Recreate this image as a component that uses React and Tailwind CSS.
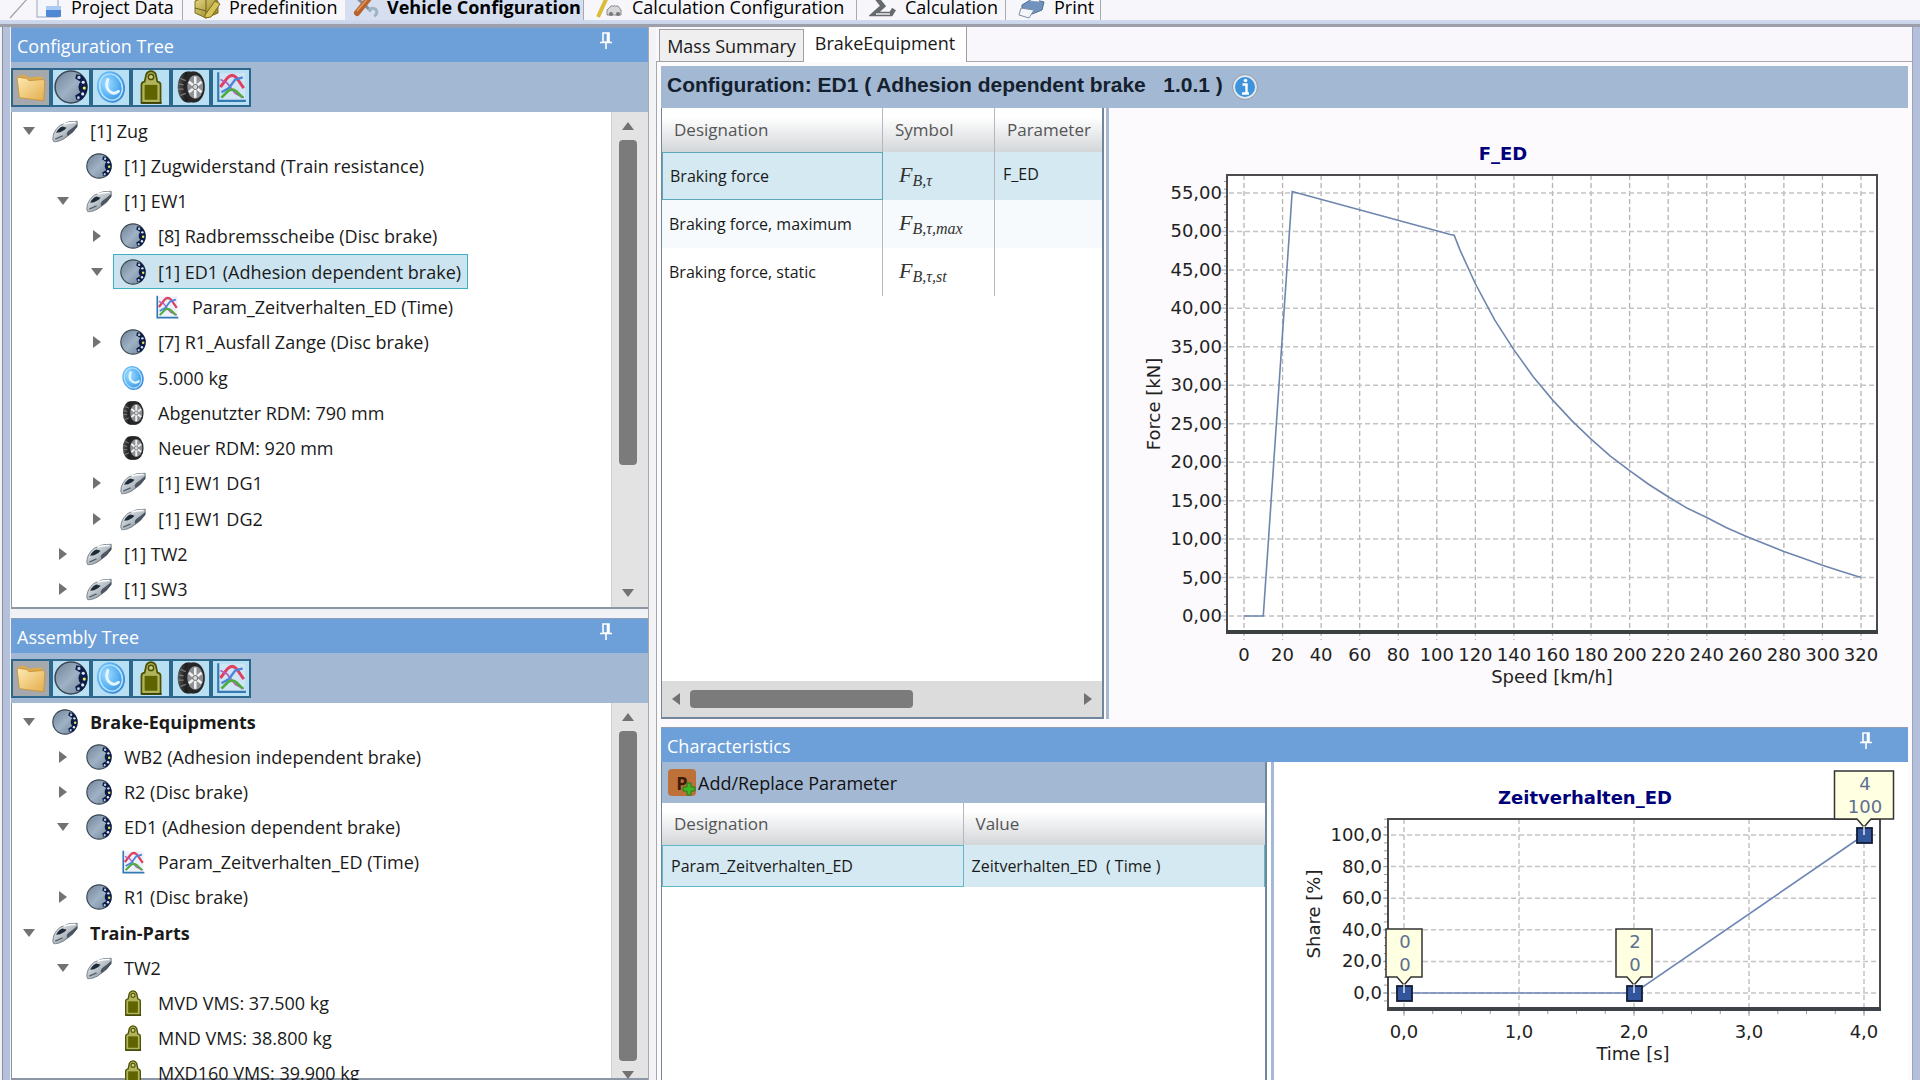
import React from "react";

const UI = "font-['Open_Sans','Noto_Sans',sans-serif]";

/* ---------- shared gradients ---------- */
function Gradients() {
  return (
    <svg width="0" height="0" className="absolute" aria-hidden="true">
      <defs>
        <linearGradient id="gDisc" x1="0" y1="0" x2="1" y2="1">
          <stop offset="0" stopColor="#6f8296" />
          <stop offset="0.5" stopColor="#9fb1c4" />
          <stop offset="1" stopColor="#6d8096" />
        </linearGradient>
        <radialGradient id="gBlue" cx="0.4" cy="0.35" r="0.7">
          <stop offset="0" stopColor="#a4dcff" />
          <stop offset="0.55" stopColor="#5cb4f4" />
          <stop offset="1" stopColor="#3585d8" />
        </radialGradient>
        <linearGradient id="gFolder" x1="0" y1="0" x2="1" y2="1">
          <stop offset="0" stopColor="#fdeab2" />
          <stop offset="1" stopColor="#e3ad4c" />
        </linearGradient>
        <linearGradient id="gTyre" x1="0" y1="0" x2="1" y2="0">
          <stop offset="0" stopColor="#555555" />
          <stop offset="0.4" stopColor="#1d1d1d" />
          <stop offset="1" stopColor="#333333" />
        </linearGradient>
        <linearGradient id="gTrain" x1="0" y1="0" x2="1" y2="1">
          <stop offset="0" stopColor="#f1f3f5" />
          <stop offset="0.55" stopColor="#b4bcc3" />
          <stop offset="1" stopColor="#4b5660" />
        </linearGradient>
        <linearGradient id="gCube" x1="0" y1="0" x2="1" y2="1">
          <stop offset="0" stopColor="#e8dc86" />
          <stop offset="1" stopColor="#8c7a1c" />
        </linearGradient>
      </defs>
    </svg>
  );
}

/* ---------- icons ---------- */
const Icon = ({ className = "size-[26px]", children, box = "0 0 32 32" }) => (
  <svg viewBox={box} className={`${className} shrink-0`} aria-hidden="true">{children}</svg>
);

const DiscIcon = (p) => (
  <Icon {...p}>
    <circle cx="16" cy="16" r="15" fill="url(#gDisc)" stroke="#3b4754" strokeWidth="1.4" />
    <path d="M21 4 L26 5 Q31.5 10 31.5 16 Q31.5 23 26 28 L21 28 L20 24 L25 21 Q23 19 23 16 Q23 13 25 11 L20 8Z" fill="#0d1c47" />
    <circle cx="23.500" cy="7" r="1.500" fill="#bcd0e8" />
    <circle cx="27.500" cy="11.500" r="1.500" fill="#dbe8f4" />
    <circle cx="28.500" cy="17" r="1.500" fill="#e6e96a" />
    <circle cx="27" cy="22.500" r="1.500" fill="#dbe8f4" />
    <circle cx="23" cy="26" r="1.300" fill="#bcd0e8" />
  </Icon>
);
const BlueIcon = (p) => (
  <Icon {...p}>
    <ellipse cx="16" cy="16" rx="13" ry="15" fill="url(#gBlue)" transform="rotate(-18 16 16)" />
    <ellipse cx="16" cy="16" rx="10.500" ry="12.500" fill="none" stroke="#b8e4ff" strokeWidth="1.4" transform="rotate(-18 16 16)" />
    <path d="M13 9 Q10 18 16 21 Q20 23 23 20" fill="none" stroke="#e4f6ff" strokeWidth="2.800" strokeLinecap="round" />
  </Icon>
);
const WeightIcon = (p) => (
  <Icon {...p}>
    <path d="M7 31 V14 Q7 11.500 10 11 L11.500 4 Q13 1 16 1 Q19 1 20.500 4 L22 11 Q25 11.500 25 14 V31Z" fill="#b0b45c" stroke="#4b5000" strokeWidth="1.6" />
    <rect x="10" y="14" width="12" height="14" fill="#5f6400" />
    <circle cx="16" cy="6.500" r="2.500" fill="#c9cc8a" stroke="#4b5000" strokeWidth="1.300" />
    <path d="M7 31 H26" stroke="#3b3f00" strokeWidth="1.500" />
  </Icon>
);
const WheelIcon = (p) => (
  <Icon {...p}>
    <ellipse cx="13" cy="16" rx="9.500" ry="14.500" fill="url(#gTyre)" />
    <rect x="13" y="1.500" width="6" height="29" fill="#2a2a2a" />
    <ellipse cx="19" cy="16" rx="10" ry="14.500" fill="#262626" />
    <path d="M6 8l5 2M4 13l5 1M4 18l5 0M6 24l5-2" stroke="#7d7d7d" strokeWidth="1.200" />
    <ellipse cx="20" cy="16" rx="7.500" ry="11" fill="#8d9094" />
    <path d="M20 16V6M20 16l6-5M20 16l6 5M20 16v10M20 16l-6 5M20 16l-6-5" stroke="#f0f1f2" strokeWidth="2.400" />
    <circle cx="20" cy="16" r="2.400" fill="#d7d9db" stroke="#555" strokeWidth="0.800" />
  </Icon>
);
const CurveIcon = (p) => (
  <Icon {...p}>
    <rect x="5" y="3" width="24" height="25" fill="#dfe9f5" opacity="0.6" />
    <path d="M4 2V29H30" fill="none" stroke="#3478b4" strokeWidth="2" />
    <path d="M6 16 L13 7 Q17 3 21 7 L28 17" fill="none" stroke="#e04060" strokeWidth="2.800" />
    <path d="M6 9 L12 12 L20 22 L28 26" fill="none" stroke="#b85ab8" strokeWidth="1.600" />
    <path d="M7 21 L14 17 L20 9 L27 7" fill="none" stroke="#4a84dc" strokeWidth="2.200" />
    <path d="M7 26 L13 20 Q17 17 21 20 L27 26" fill="none" stroke="#4dac3c" strokeWidth="2.600" />
  </Icon>
);
const TrainIcon = (p) => (
  <Icon {...p}>
    <path d="M1 26 Q1 16 10 9 Q20 3 31 4 L31 10 Q26 19 14 26 Q6 30 2 29Z" fill="url(#gTrain)" stroke="#69737c" strokeWidth="1" />
    <path d="M5 18 Q8 12 13 10.500 L18 12 Q15 16 10 17.500Z" fill="#1d2a38" />
    <path d="M20 16 Q26 12 31 7.500 L31 11 Q27 17 19 22 Q17 19 20 16Z" fill="#3c4753" opacity="0.850" />
    <path d="M14 7.500 Q21 5 29 5.500" fill="none" stroke="#ffffff" strokeWidth="1.800" />
    <path d="M4 26 L13 22" stroke="#56616c" strokeWidth="1.400" />
  </Icon>
);
const FolderIcon = (p) => (
  <Icon {...p}>
    <path d="M3 6 L10 4 L13 7 L25 6 Q27 6 27 8 V28 L5 26Z" fill="#dca94c" />
    <path d="M3 8 Q3 7 5 7 L12 8 L14 10 L27 9 Q29 9 29 11 L28 29 L5 26Z" fill="url(#gFolder)" stroke="#c8923a" strokeWidth="0.800" />
  </Icon>
);

const icons = { disc: DiscIcon, blue: BlueIcon, weight: WeightIcon, wheel: WheelIcon, curve: CurveIcon, train: TrainIcon, folder: FolderIcon };

const PinIcon = () => (
  <svg viewBox="0 0 12 17" className="h-[17px] w-3" aria-hidden="true">
    <path d="M3 1H9V10H3ZM7.500 1V10M0 10.500H12M6 10.500V17" fill="none" stroke="#fff" strokeWidth="1.600" />
  </svg>
);

const Arrow = ({ dir, className = "" }) => {
  const d = { down: "M0 1H12L6 9Z", up: "M0 9H12L6 1Z", right: "M2 -1V11L10 5Z", left: "M10 -1V11L2 5Z" }[dir];
  return (
    <svg viewBox="0 -1 12 12" className={`size-3 shrink-0 ${className}`} aria-hidden="true">
      <path d={d} fill="#727272" />
    </svg>
  );
};

/* ---------- top ribbon ---------- */
const Slash = () => (
  <svg viewBox="0 0 24 20" className="h-5 w-6" aria-hidden="true">
    <path d="M2 18L20 -2" stroke="#a4a4ac" strokeWidth="1.300" fill="none" />
  </svg>
);
const DocIcon = () => (
  <Icon className="size-7" box="0 0 28 28">
    <rect x="2" y="0" width="21" height="24" fill="#f4f6fb" stroke="#9aa4b8" />
    <rect x="11" y="13" width="15" height="11" rx="1" fill="#4f87d4" />
    <rect x="11" y="13" width="15" height="4" fill="#a9caf4" />
  </Icon>
);
const CubeIcon = () => (
  <Icon className="size-7" box="0 0 28 28">
    <path d="M2 8L13 4L25 8V20L13 25L2 20Z" fill="url(#gCube)" stroke="#7f701e" />
    <path d="M13 4V25M2 15L13 18" stroke="#6d6018" fill="none" />
    <path d="M12 22L22 8L27 11L18 24L12 25Z" fill="#d6c45a" stroke="#7b6c1a" />
  </Icon>
);
const ToolsIcon = () => (
  <Icon className="size-7" box="0 0 28 28">
    <path d="M3 2L20 18" stroke="#7d8ea0" strokeWidth="3" />
    <path d="M23 23a4 4 0 1 0-5-5" fill="none" stroke="#9eb4c4" strokeWidth="3" />
    <path d="M19 4L6 20" stroke="#b9622c" strokeWidth="6" strokeLinecap="round" />
    <path d="M19 3L6 18" stroke="#e19a62" strokeWidth="1.500" />
  </Icon>
);
const CalcConfIcon = () => (
  <Icon className="size-7" box="0 0 28 28">
    <path d="M2 24L12 2" stroke="#d9bd3a" strokeWidth="4" />
    <path d="M11 22V17L15 13H22L25 17V22Z" fill="#d7d7da" stroke="#8b8b90" />
    <circle cx="15" cy="21" r="2" fill="#777" /><circle cx="22" cy="21" r="2" fill="#777" />
  </Icon>
);
const SigmaIcon = () => (
  <Icon className="size-7" box="0 0 28 28">
    <path d="M23 7V3H6L14 13L5 21H22L25 16" fill="none" stroke="#66696e" strokeWidth="4.500" />
    <path d="M7 21H21" stroke="#d5d7d9" strokeWidth="1.800" />
  </Icon>
);
const PrintIcon = () => (
  <Icon className="size-7" box="0 0 28 28">
    <path d="M4 12L14 6L26 9L24 17L14 21L4 18Z" fill="#6f93bd" stroke="#4b6c96" />
    <path d="M3 15L16 17L11 25L1 22Z" fill="#f2f5f9" stroke="#7d8ea6" />
    <path d="M12 8L15 0H24L21 9Z" fill="#fff" stroke="#8fa3bd" />
  </Icon>
);

function RibbonTab({ icon, label, active, className = "" }) {
  return (
    <button type="button" className={`flex h-[27px] shrink-0 items-center gap-2 whitespace-nowrap text-lg leading-6 text-black ${active ? "font-bold" : ""} ${className}`}>
      {icon}
      {label}
    </button>
  );
}
const Sep = () => <span className="h-5 w-px bg-[#a9a9b2]" />;

function Ribbon() {
  return (
    <nav className="shrink-0 border-b-3 border-[#9c9ea9] bg-gradient-to-b from-[#f3f4f9] to-[#c9d4ea]">
      <div className="mb-1 flex h-5 items-end overflow-hidden bg-[#f7f7fb] pl-2">
        <Slash />
        <RibbonTab icon={<DocIcon />} label="Project Data" className="w-[150px] pl-[3px]" />
        <Sep />
        <RibbonTab icon={<CubeIcon />} label="Predefinition" className="w-[162px] pl-[10px]" />
        <div className="flex h-[27px] w-[238px] items-center bg-[#d5dff0] pl-[6px]">
          <RibbonTab icon={<ToolsIcon />} label="Vehicle Configuration" active />
        </div>
        <Sep />
        <RibbonTab icon={<CalcConfIcon />} label="Calculation Configuration" className="w-[272px] pl-3" />
        <Sep />
        <RibbonTab icon={<SigmaIcon />} label="Calculation" className="w-[148px] pl-3" />
        <Sep />
        <RibbonTab icon={<PrintIcon />} label="Print" className="w-[94px] pl-3" />
        <Sep />
      </div>
    </nav>
  );
}

/* ---------- trees ---------- */
const toolbarItems = [
  ["folder", "Folders"], ["disc", "Brakes"], ["blue", "Rotating mass"],
  ["weight", "Mass"], ["wheel", "Wheels"], ["curve", "Curves"],
];

const indents = ["pl-[11px]", "pl-[45px]", "pl-[79px]", "pl-[113px]"];

function TreeRow({ depth, arrow, icon, label, bold, selected }) {
  const I = icons[icon];
  return (
    <li className={`flex items-center whitespace-nowrap ${indents[depth]}`}>
      {arrow ? (
        <button type="button" aria-label={`Toggle ${label}`} className="size-3"><Arrow dir={arrow} /></button>
      ) : (
        <span className="w-3" />
      )}
      <button
        type="button"
        className={`ml-[10px] flex h-[35px] items-center gap-3 border pr-1.5 pl-[6px] ${selected ? "border-[#3fb0c4] bg-[#cbe4ef]" : "border-transparent"} ${bold ? "font-bold" : ""}`}
      >
        <I />
        {label}
      </button>
    </li>
  );
}

function PanelHeader({ title }) {
  return (
    <header className="flex h-[35px] shrink-0 items-start justify-between border-t border-[#8f9fb8] bg-[#6d9fd8] pr-9 pl-[6px] text-white">
      <h2 className="text-lg leading-9">{title}</h2>
      <button type="button" aria-label="Pin panel" className="mt-1"><PinIcon /></button>
    </header>
  );
}

function TreePanel({ title, rows, listClass, thumbClass, className }) {
  return (
    <section className={`flex flex-col overflow-hidden ${className}`}>
      <PanelHeader title={title} />
      <div className="flex h-[50px] shrink-0 items-center bg-[#a3b8d2]">
        {toolbarItems.map(([name, label], i) => {
          const I = icons[name];
          return (
            <button
              key={name}
              type="button"
              aria-label={label}
              className={`flex h-[39px] w-10 items-center justify-center border-2 border-[#2d678c] ${i === 0 ? "bg-[#a5a9ae]" : "bg-[#b9dff3]"}`}
            >
              <I className="size-[34px]" />
            </button>
          );
        })}
      </div>
      <div className="flex min-h-0 flex-1 border-b-2 border-l border-[#8d96a5] bg-white">
        <ul className={`grid flex-1 auto-rows-fr pt-px text-lg leading-6 text-[#1a1a1a] ${listClass}`}>
          {rows.map((r) => <TreeRow key={r.label + r.depth} {...r} />)}
        </ul>
        <div className="flex w-[37px] flex-col items-center border-l border-[#d0d0d0] bg-[#e3e3e3] py-2 pr-1">
          <Arrow dir="up" />
          <span className={`my-2 w-[18px] rounded-sm bg-[#7b7b7b] ${thumbClass}`} />
          <span className="flex-1" />
          <Arrow dir="down" />
        </div>
      </div>
    </section>
  );
}

const configRows = [
  { depth: 0, arrow: "down", icon: "train", label: "[1] Zug" },
  { depth: 1, icon: "disc", label: "[1] Zugwiderstand (Train resistance)" },
  { depth: 1, arrow: "down", icon: "train", label: "[1] EW1" },
  { depth: 2, arrow: "right", icon: "disc", label: "[8] Radbremsscheibe (Disc brake)" },
  { depth: 2, arrow: "down", icon: "disc", label: "[1] ED1 (Adhesion dependent brake)", selected: true },
  { depth: 3, icon: "curve", label: "Param_Zeitverhalten_ED (Time)" },
  { depth: 2, arrow: "right", icon: "disc", label: "[7] R1_Ausfall Zange (Disc brake)" },
  { depth: 2, icon: "blue", label: "5.000 kg" },
  { depth: 2, icon: "wheel", label: "Abgenutzter RDM: 790 mm" },
  { depth: 2, icon: "wheel", label: "Neuer RDM: 920 mm" },
  { depth: 2, arrow: "right", icon: "train", label: "[1] EW1 DG1" },
  { depth: 2, arrow: "right", icon: "train", label: "[1] EW1 DG2" },
  { depth: 1, arrow: "right", icon: "train", label: "[1] TW2" },
  { depth: 1, arrow: "right", icon: "train", label: "[1] SW3" },
];

const assemblyRows = [
  { depth: 0, arrow: "down", icon: "disc", label: "Brake-Equipments", bold: true },
  { depth: 1, arrow: "right", icon: "disc", label: "WB2 (Adhesion independent brake)" },
  { depth: 1, arrow: "right", icon: "disc", label: "R2 (Disc brake)" },
  { depth: 1, arrow: "down", icon: "disc", label: "ED1 (Adhesion dependent brake)" },
  { depth: 2, icon: "curve", label: "Param_Zeitverhalten_ED (Time)" },
  { depth: 1, arrow: "right", icon: "disc", label: "R1 (Disc brake)" },
  { depth: 0, arrow: "down", icon: "train", label: "Train-Parts", bold: true },
  { depth: 1, arrow: "down", icon: "train", label: "TW2" },
  { depth: 2, icon: "weight", label: "MVD VMS: 37.500 kg" },
  { depth: 2, icon: "weight", label: "MND VMS: 38.800 kg" },
  { depth: 2, icon: "weight", label: "MXD160 VMS: 39.900 kg" },
];

/* ---------- charts ---------- */
const chartFont = "font-['DejaVu_Sans',sans-serif]";

const forceCurve = [
  [0, 0], [10, 0], [25, 55.2], [107, 49.6], [109, 49.5], [112, 47.6], [120, 43.2], [130, 38.5], [140, 34.6], [150, 31.1],
  [160, 28.1], [170, 25.4], [180, 23], [190, 20.8], [200, 18.9], [210, 17.1], [220, 15.5], [230, 14], [240, 12.8],
  [250, 11.5], [260, 10.4], [270, 9.4], [280, 8.4], [290, 7.5], [300, 6.6], [310, 5.8], [320, 5],
];

function ForceChart() {
  const X = (v) => 135 + (v * 617) / 320;
  const Y = (v) => 508 - (v * 423) / 55;
  const xs = Array.from({ length: 17 }, (_, i) => i * 20);
  const ys = Array.from({ length: 12 }, (_, i) => i * 5);
  return (
    <svg viewBox="0 0 799 615" className={`block w-full text-lg ${chartFont}`} role="img" aria-label="F_ED: force over speed">
      <rect x="118" y="67" width="650" height="458" fill="#fff" />
      {xs.map((v) => <path key={v} d={`M${X(v)} 67V532`} stroke="#b4b4b4" strokeWidth="1.300" strokeDasharray="5 3" />)}
      {ys.map((v) => <path key={v} d={`M112 ${Y(v)}H768`} stroke="#c4c4c4" strokeWidth="1.500" strokeDasharray="5 3" />)}
      {Array.from({ length: 58 }, (_, i) => <path key={i} d={`M115 ${Y(i - 0.5)}H118`} stroke="#999" />)}
      <rect x="118" y="67" width="650" height="458" fill="none" stroke="#4b4b4b" strokeWidth="2" />
      <path d="M117 524H769" stroke="#3d4040" strokeWidth="4" />
      <polyline points={forceCurve.map(([a, b]) => `${X(a)},${Y(b)}`).join(" ")} fill="none" stroke="#6e86ad" strokeWidth="1.600" />
      {ys.map((v) => <text key={v} x="113" y={Y(v) + 6} textAnchor="end" fill="#222">{`${v},00`}</text>)}
      {xs.map((v) => <text key={v} x={X(v)} y="553" textAnchor="middle" fill="#222">{v}</text>)}
      <text x="443" y="575" textAnchor="middle" fill="#222">Speed [km/h]</text>
      <text transform="translate(51 296) rotate(-90)" textAnchor="middle" fill="#222">Force [kN]</text>
      <text x="394" y="52" textAnchor="middle" fill="#00007a" fontWeight="bold">F_ED</text>
    </svg>
  );
}

function Callout({ x, y, w, top, bottom }) {
  const h = w / 2;
  return (
    <g>
      <path d={`M${x - h} ${y - 64}H${x + h}V${y - 16}H${x + 7}L${x} ${y - 8}L${x - 7} ${y - 16}H${x - h}Z`} fill="#ffffe1" stroke="#333" strokeWidth="1.500" />
      <rect x={x - 7} y={y - 7} width="15" height="15" fill="#33559c" stroke="#111d38" strokeWidth="1.800" />
      <path d={`M${x} ${y - 9}V${y}`} stroke="#dfe6f2" strokeWidth="1.500" />
      <text x={x + 1} y={y - 45} textAnchor="middle" fill="#5e6f94">{top}</text>
      <text x={x + 1} y={y - 22} textAnchor="middle" fill="#5e6f94">{bottom}</text>
    </g>
  );
}

function TimeChart() {
  const X = (v) => 130 + v * 115;
  const Y = (v) => 231 - v * 1.58;
  const xs = [0, 1, 2, 3, 4];
  const ys = [0, 20, 40, 60, 80, 100];
  return (
    <svg viewBox="0 0 634 318" className={`block w-full text-lg ${chartFont}`} role="img" aria-label="Zeitverhalten_ED: share over time">
      {xs.map((v) => <path key={v} d={`M${X(v)} 57V255`} stroke="#c4c4c4" strokeWidth="1.500" strokeDasharray="5 3" />)}
      {ys.map((v) => <path key={v} d={`M109 ${Y(v)}H606`} stroke="#c4c4c4" strokeWidth="1.500" strokeDasharray="5 3" />)}
      {Array.from({ length: 24 }, (_, i) => <path key={i} d={`M110 ${Y(i * 5 - 5)}H113`} stroke="#999" />)}
      {Array.from({ length: 17 }, (_, i) => <path key={i} d={`M${X(i / 4)} 249V252`} stroke="#999" />)}
      <rect x="114" y="57" width="492" height="191" fill="none" stroke="#4b4b4b" strokeWidth="2" />
      <path d="M113 247H607" stroke="#3d4348" strokeWidth="4" />
      <polyline points={`${X(0)},${Y(0)} ${X(2)},${Y(0)} ${X(4)},${Y(100)}`} fill="none" stroke="#6e86b5" strokeWidth="1.600" />
      {ys.map((v) => <text key={v} x="108" y={Y(v) + 6} textAnchor="end" fill="#222">{`${v},0`}</text>)}
      {xs.map((v) => <text key={v} x={X(v)} y="276" textAnchor="middle" fill="#222">{`${v},0`}</text>)}
      <text x="359" y="298" textAnchor="middle" fill="#222">Time [s]</text>
      <text transform="translate(46 152) rotate(-90)" textAnchor="middle" fill="#222">Share [%]</text>
      <text x="311" y="42" textAnchor="middle" fill="#00007a" fontWeight="bold">Zeitverhalten_ED</text>
      <Callout x={X(0)} y={Y(0)} w={36} top="0" bottom="0" />
      <Callout x={X(2)} y={Y(0)} w={36} top="2" bottom="0" />
      <Callout x={X(4)} y={Y(100)} w={59} top="4" bottom="100" />
    </svg>
  );
}

/* ---------- tables ---------- */
const th = "border-r border-[#b4b8bc] text-[17px] font-normal text-left text-[#555] last:border-r-0";
const headGradient = "bg-gradient-to-b from-white from-20% to-[#d3d6d9]";

const Sym = ({ sub }) => (
  <span className="font-['Liberation_Serif',serif] text-[22px] leading-none text-[#333] italic">
    F<sub className="text-base">{sub}</sub>
  </span>
);

const forces = [
  ["Braking force", "B,τ", "F_ED"],
  ["Braking force, maximum", "B,τ,max", ""],
  ["Braking force, static", "B,τ,st", ""],
];

function ForceTable() {
  return (
    <div className="flex w-[443px] shrink-0 flex-col border-r-2 border-b-2 border-l border-[#71869b] bg-white">
      <table className="w-full table-fixed border-separate border-spacing-0 text-base">
        <colgroup><col className="w-[221px]" /><col className="w-[112px]" /><col /></colgroup>
        <thead>
          <tr className={`h-11 ${headGradient}`}>
            <th className={`${th} pl-3`}>Designation</th>
            <th className={`${th} pl-3`}>Symbol</th>
            <th className={`${th} pl-3`}>Parameter</th>
          </tr>
        </thead>
        <tbody>
          {forces.map(([name, sub, param], i) => (
            <tr key={name} className={`h-12 ${["bg-[#d4e9f2]", "bg-[#f6fafc]", "bg-white"][i]}`}>
              <td className={`pl-[7px] ${i === 0 ? "border border-[#5aa7b5]" : "border-r border-[#b4b8bc]"}`}>{name}</td>
              <td className="border-r border-[#b4b8bc] pl-4"><Sym sub={sub} /></td>
              <td className="pb-1 pl-2">{param}</td>
            </tr>
          ))}
        </tbody>
      </table>
      <div className="mt-auto flex h-9 items-center bg-[#dcdcdc] px-2">
        <Arrow dir="left" />
        <span className="ml-2 h-[18px] w-[223px] rounded-sm bg-[#7b7b7b]" />
        <Arrow dir="right" className="ml-auto" />
      </div>
    </div>
  );
}

function CharTable() {
  return (
    <div className="flex min-h-0 w-[606px] shrink-0 flex-col border-r-2 border-l border-[#71869b] bg-white">
      <button type="button" className="flex h-[41px] w-full shrink-0 items-center bg-[#a3b8d2] pl-[6px] text-lg text-[#111]">
        <span className="relative flex h-[27px] w-7 items-center justify-center rounded-sm bg-[#bd7038] text-lg font-bold text-[#3a1c08]">
          P
          <svg viewBox="0 0 14 14" className="absolute right-0 bottom-0 size-3.5" aria-hidden="true">
            <path d="M5 1H9V5H13V9H9V13H5V9H1V5H5Z" fill="#3fb52a" stroke="#267a17" />
          </svg>
        </span>
        <span className="pl-0.5">Add/Replace Parameter</span>
      </button>
      <table className="w-full table-fixed border-separate border-spacing-0 text-base">
        <thead>
          <tr className={`h-[42px] ${headGradient}`}>
            <th className={`${th} pl-3`}>Designation</th>
            <th className={`${th} pl-3`}>Value</th>
          </tr>
        </thead>
        <tbody>
          <tr className="h-[42px] bg-[#d4e9f2]">
            <td className="border border-[#5fb9c9] pl-2">Param_Zeitverhalten_ED</td>
            <td className="border-r border-[#5fb9c9] pl-2 whitespace-pre">{"Zeitverhalten_ED  ( Time )"}</td>
          </tr>
        </tbody>
      </table>
    </div>
  );
}

/* ---------- right side ---------- */
function Workspace() {
  return (
    <main className="flex min-w-0 flex-1 flex-col bg-[#f9f7fb]">
      <div className="flex h-[35px] shrink-0 items-end" role="tablist">
        <span className="w-[3px] self-stretch border-b border-[#a8a8a8]" />
        <button type="button" role="tab" aria-selected="false" className="h-[33px] w-[145px] border border-[#9f9fa4] bg-[#efefef] text-lg whitespace-nowrap">
          Mass Summary
        </button>
        <button type="button" role="tab" aria-selected="true" className="h-[35px] w-[163px] border-r border-[#9f9fa4] bg-white pb-1 text-lg">
          BrakeEquipment
        </button>
        <span className="flex-1 self-stretch border-b border-[#a8a8a8]" />
      </div>
      <div className="flex min-h-0 flex-1 flex-col overflow-hidden border-l border-[#a8a8a8] bg-[#fcfafc] pt-1 pr-1 pl-1">
        <div className="flex h-[42px] shrink-0 items-center gap-2 bg-[#a3b8d2] pb-1 pl-[6px]">
          <h1 className="font-['Liberation_Sans',sans-serif] text-[21px] leading-6 font-bold whitespace-pre text-[#14202e]">
            {"Configuration: ED1 ( Adhesion dependent brake   1.0.1 )"}
          </h1>
          <button type="button" aria-label="Information" className="mt-1">
            <svg viewBox="0 0 28 28" className="size-7" aria-hidden="true">
              <circle cx="14" cy="14" r="12.500" fill="#dfe7ee" stroke="#8d9cab" />
              <circle cx="14" cy="14" r="10" fill="#3d94dd" />
              <path d="M11.500 11.500H15.500V20M11 20.500H18" fill="none" stroke="#fff" strokeWidth="2.400" />
              <circle cx="14.500" cy="7.500" r="1.800" fill="#fff" />
            </svg>
          </button>
        </div>
        <div className="flex shrink-0">
          <div className="flex pb-1">
            <ForceTable />
            <span className="ml-[2px] w-[3px] bg-[#a3b8d2]" />
          </div>
          <div className="min-w-0 flex-1"><ForceChart /></div>
        </div>
        <section className="mt-1 flex min-h-0 flex-1 flex-col">
          <PanelHeader title="Characteristics" />
          <div className="flex min-h-0 flex-1 bg-white">
            <CharTable />
            <span className="ml-1 w-[3px] shrink-0 bg-[#a3b8d2]" />
            <div className="min-w-0 flex-1"><TimeChart /></div>
          </div>
        </section>
      </div>
    </main>
  );
}

export default function App() {
  return (
    <div className={`flex h-screen flex-col overflow-hidden bg-[#f1f2f6] text-[#1a1a1a] ${UI}`}>
      <Gradients />
      <Ribbon />
      <div className="flex min-h-0 flex-1">
        <span className="ml-[2px] w-2 shrink-0 border-l border-[#8e8e9a] bg-[#b5c1da]" />
        <aside className="ml-px flex w-[637px] shrink-0 flex-col gap-[9px]">
          <TreePanel title="Configuration Tree" rows={configRows} listClass="h-[495px]" thumbClass="h-[325px]" className="shrink-0" />
          <TreePanel title="Assembly Tree" rows={assemblyRows} listClass="h-[388px]" thumbClass="h-[330px] shrink-0" className="flex-1" />
        </aside>
        <span className="w-2 shrink-0 border-l border-[#a8a8b0] bg-[#f3f3f6]" />
        <Workspace />
        <span className="w-2 shrink-0 border-l border-[#9aa3b8] bg-[#b3bfdb]" />
      </div>
    </div>
  );
}
